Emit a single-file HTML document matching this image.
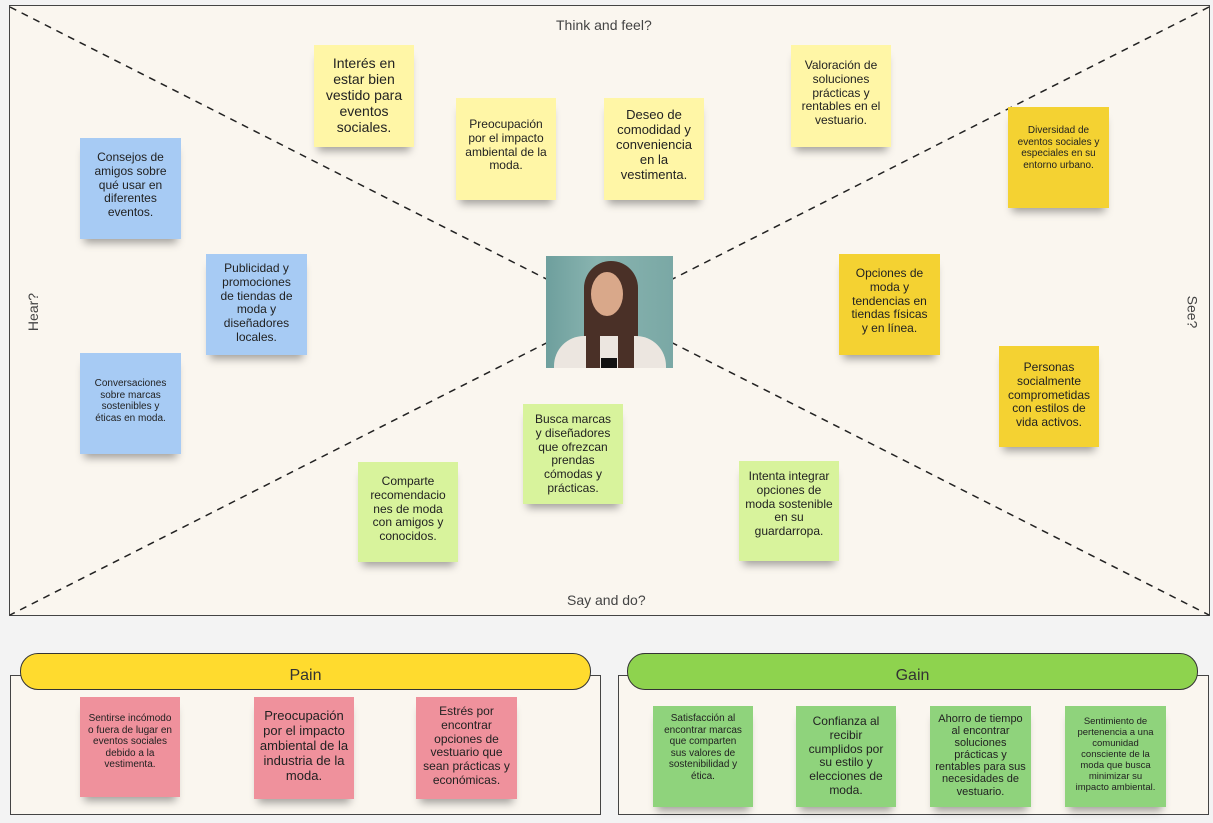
<!DOCTYPE html>
<html><head><meta charset="utf-8"><style>
body{margin:0;width:1213px;height:823px;background:#f3f3f3;position:relative;overflow:hidden;font-family:"Liberation Sans",Arial,sans-serif;}
.frame{position:absolute;background:#faf6ef;border:1.5px solid #444;box-sizing:border-box;}
.n{position:absolute;box-sizing:border-box;text-align:center;color:#222;padding:10px 8px 0;line-height:1.15;box-shadow:0 8px 8px -4px rgba(0,0,0,0.35);word-wrap:break-word;}
.ly{background:#fff6a6}.dy{background:#f4d232}.bl{background:#a7cbf4}.lg{background:#d8f39c}.pk{background:#ef919c}.gr{background:#8fd37c}
.lbl{position:absolute;color:#444;font-size:14px;}
.pill{position:absolute;height:37px;border:1.5px solid #333;border-radius:18px;box-sizing:border-box;text-align:center;font-size:16px;line-height:44px;color:#333;}
</style></head><body>
<div class="frame" style="left:9px;top:5px;width:1201px;height:611px;"></div>
<svg style="position:absolute;left:0;top:0" width="1213" height="823">
<line x1="10" y1="7" x2="1209" y2="615" stroke="#222" stroke-width="1.5" stroke-dasharray="7,6"/>
<line x1="1209" y1="7" x2="10" y2="615" stroke="#222" stroke-width="1.5" stroke-dasharray="7,6"/>
</svg>
<div class="lbl" style="left:556px;top:17px;">Think and feel?</div>
<div class="lbl" style="left:567px;top:592px;">Say and do?</div>
<div class="lbl" style="left:14px;top:304px;transform:rotate(-90deg);">Hear?</div>
<div class="lbl" style="left:1176px;top:304px;transform:rotate(90deg);">See?</div>
<div style="position:absolute;left:546px;top:256px;width:127px;height:112px;background:linear-gradient(90deg,#6e9f9d,#89b4b0 40%,#7aa8a5);overflow:hidden;">
<div style="position:absolute;left:38px;top:5px;width:54px;height:105px;background:#4a3027;border-radius:28px 28px 10px 10px;"></div>
<div style="position:absolute;left:45px;top:16px;width:32px;height:44px;background:#d9a88a;border-radius:50%;"></div>
<div style="position:absolute;left:8px;top:80px;width:112px;height:40px;background:#ece6e0;border-radius:30px 30px 0 0;"></div>
<div style="position:absolute;left:40px;top:80px;width:14px;height:32px;background:#4a3027;"></div>
<div style="position:absolute;left:72px;top:78px;width:16px;height:34px;background:#4a3027;"></div>
<div style="position:absolute;left:55px;top:102px;width:16px;height:10px;background:#111;"></div>
</div>
<div class="n ly" style="left:314px;top:45px;width:100px;height:102px;font-size:14px;">Interés en estar bien vestido para eventos sociales.</div>
<div class="n ly" style="left:456px;top:98px;width:100px;height:102px;font-size:12px;padding-top:20px;">Preocupación por el impacto ambiental de la moda.</div>
<div class="n ly" style="left:604px;top:98px;width:100px;height:102px;font-size:13px;">Deseo de comodidad y conveniencia en la vestimenta.</div>
<div class="n ly" style="left:791px;top:45px;width:100px;height:102px;font-size:12px;padding-top:14px;">Valoración de soluciones prácticas y rentables en el vestuario.</div>
<div class="n dy" style="left:1008px;top:107px;width:101px;height:101px;font-size:10px;padding-top:18px;">Diversidad de eventos sociales y especiales en su entorno urbano.</div>
<div class="n dy" style="left:839px;top:254px;width:101px;height:101px;font-size:12px;padding-top:13px;">Opciones de moda y tendencias en tiendas físicas y en línea.</div>
<div class="n dy" style="left:999px;top:346px;width:100px;height:101px;font-size:12px;padding:15px 4px 0;">Personas socialmente comprometidas con estilos de vida activos.</div>
<div class="n bl" style="left:80px;top:138px;width:101px;height:101px;font-size:12px;padding-top:13px;">Consejos de amigos sobre qué usar en diferentes eventos.</div>
<div class="n bl" style="left:206px;top:254px;width:101px;height:101px;font-size:12px;padding-top:8px;">Publicidad y promociones de tiendas de moda y diseñadores locales.</div>
<div class="n bl" style="left:80px;top:353px;width:101px;height:101px;font-size:10px;padding-top:25px;">Conversaciones sobre marcas sostenibles y éticas en moda.</div>
<div class="n lg" style="left:523px;top:404px;width:100px;height:100px;font-size:12px;padding-top:9px;">Busca marcas y diseñadores que ofrezcan prendas cómodas y prácticas.</div>
<div class="n lg" style="left:358px;top:462px;width:100px;height:100px;font-size:12px;padding:13px 10px 0;">Comparte recomendacio nes de moda con amigos y conocidos.</div>
<div class="n lg" style="left:739px;top:461px;width:100px;height:100px;font-size:12px;padding:9px 5px 0;">Intenta integrar opciones de moda sostenible en su guardarropa.</div>
<div class="frame" style="left:10px;top:675px;width:591px;height:140px;"></div>
<div class="pill" style="left:20px;top:653px;width:571px;background:#ffdb2e;">Pain</div>
<div class="n pk" style="left:80px;top:697px;width:100px;height:100px;font-size:10px;padding-top:16px;">Sentirse incómodo o fuera de lugar en eventos sociales debido a la vestimenta.</div>
<div class="n pk" style="left:254px;top:697px;width:100px;height:102px;font-size:13px;padding:12px 4px 0;">Preocupación por el impacto ambiental de la industria de la moda.</div>
<div class="n pk" style="left:416px;top:697px;width:101px;height:102px;font-size:12px;padding:8px 6px 0;">Estrés por encontrar opciones de vestuario que sean prácticas y económicas.</div>
<div class="frame" style="left:618px;top:675px;width:591px;height:140px;"></div>
<div class="pill" style="left:627px;top:653px;width:571px;background:#8ed34e;">Gain</div>
<div class="n gr" style="left:653px;top:706px;width:100px;height:101px;font-size:10px;padding-top:7px;">Satisfacción al encontrar marcas que comparten sus valores de sostenibilidad y ética.</div>
<div class="n gr" style="left:796px;top:706px;width:100px;height:101px;font-size:12px;padding-top:9px;">Confianza al recibir cumplidos por su estilo y elecciones de moda.</div>
<div class="n gr" style="left:930px;top:706px;width:101px;height:101px;font-size:11px;padding:7px 4px 0;line-height:1.1;">Ahorro de tiempo al encontrar soluciones prácticas y rentables para sus necesidades de vestuario.</div>
<div class="n gr" style="left:1065px;top:706px;width:101px;height:101px;font-size:9.5px;padding-top:11px;">Sentimiento de pertenencia a una comunidad consciente de la moda que busca minimizar su impacto ambiental.</div>
</body></html>
